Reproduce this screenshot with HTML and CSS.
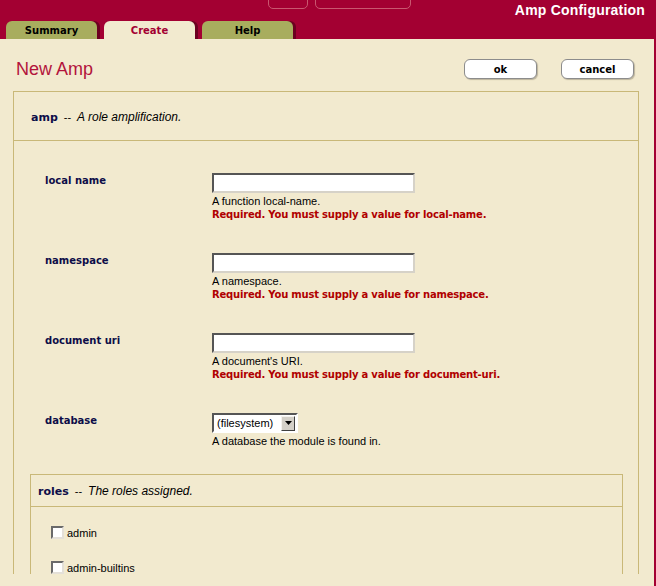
FILE: index.html
```html
<!DOCTYPE html>
<html lang="en">
<head>
  <meta charset="UTF-8" />
  <title>Amp Configuration</title>
  <link rel="stylesheet" href="styles.css">
</head>
<body>
  <div class="header">
    <div class="topbar">
      <span class="ghost ghost-a"></span>
      <span class="ghost ghost-b"></span>
      <span class="app-title">Amp Configuration</span>
    </div>
    <div class="tabs">
      <span class="tab">Summary</span>
      <span class="tab active">Create</span>
      <span class="tab">Help</span>
    </div>
  </div>

  <div class="main">
    <div class="title-row">
      <h1>New Amp</h1>
      <div class="actions">
        <button class="btn">ok</button>
        <button class="btn">cancel</button>
      </div>
    </div>

    <div class="box">
      <div class="box-head"><b>amp</b> <span class="dash">--</span> <i>A role amplification.</i></div>
      <div class="fields">
        <div class="field">
          <div class="label">local name</div>
          <div class="control">
            <input type="text" class="text">
            <div class="help">A function local-name.</div>
            <div class="error">Required. You must supply a value for local-name.</div>
          </div>
        </div>
        <div class="field">
          <div class="label">namespace</div>
          <div class="control">
            <input type="text" class="text">
            <div class="help">A namespace.</div>
            <div class="error">Required. You must supply a value for namespace.</div>
          </div>
        </div>
        <div class="field">
          <div class="label">document uri</div>
          <div class="control">
            <input type="text" class="text">
            <div class="help">A document's URI.</div>
            <div class="error">Required. You must supply a value for document-uri.</div>
          </div>
        </div>
        <div class="field last">
          <div class="label">database</div>
          <div class="control">
            <span class="select">
              <span class="select-val">(filesystem)</span>
              <span class="select-btn">
                <svg width="7" height="4" viewBox="0 0 7 4"><path d="M0 0h7L3.5 4z" fill="#000"/></svg>
              </span>
            </span>
            <div class="help">A database the module is found in.</div>
          </div>
        </div>

        <div class="box roles">
          <div class="box-head"><b>roles</b> <span class="dash">--</span> <i>The roles assigned.</i></div>
          <div class="checks">
            <label class="check"><input type="checkbox"> admin</label>
            <label class="check"><input type="checkbox"> admin-builtins</label>
          </div>
        </div>
      </div>
    </div>
  </div>
</body>
</html>
```

FILE: styles.css
```css
:root {
  --crimson: #a30032;
  --crimson-dark: #6c0020;
  --cream: #f2eacf;
  --line: #c9b878;
  --olive: #a8ad5e;
  --navy: #0d0d48;
  --err: #b00000;
}

* {
  box-sizing: border-box;
}

body {
  margin: 0;
  background: var(--crimson);
  font-family: "Liberation Sans", Arial, sans-serif;
  font-size: 11px;
  color: #000;
  height: 586px;
  overflow: hidden;
}

.header {
  height: 39px;
  display: flex;
  flex-direction: column;
}

.topbar {
  height: 21px;
  display: flex;
  align-items: flex-start;
  padding-left: 268px;
}

.ghost {
  display: block;
  height: 20px;
  margin-top: -11px;
  border: 1px solid #c9576f;
  border-radius: 5px;
}

.ghost-a { width: 40px; }
.ghost-b { width: 96px; margin-left: 7px; }

.app-title {
  margin-left: auto;
  margin-right: 11px;
  padding-top: 2px;
  color: #fff;
  font-weight: bold;
  font-size: 14px;
  line-height: 16px;
  letter-spacing: 0.2px;
}

.tabs {
  display: flex;
  gap: 7px;
  padding-left: 6px;
  height: 18px;
}

.tab {
  width: 91px;
  height: 18px;
  background: var(--olive);
  border-radius: 6px 6px 0 0;
  box-shadow: 3px 0 0 var(--crimson-dark);
  font-family: "DejaVu Sans", Verdana, sans-serif;
  font-weight: bold;
  font-size: 10px;
  line-height: 19px;
  text-align: center;
  color: #000;
}

.tab.active {
  background: var(--cream);
  color: var(--crimson);
}

.main {
  background: var(--cream);
  margin-right: 2px;
  height: 547px;
  padding-top: 13px;
}

.title-row {
  display: flex;
  align-items: center;
  justify-content: space-between;
  height: 34px;
  padding: 0 20px 0 16px;
  margin-bottom: 5px;
}

.title-row h1 {
  margin: 0;
  font-weight: normal;
  font-size: 18px;
  color: #b3143c;
}

.actions {
  display: flex;
  gap: 24px;
}

.btn {
  width: 73px;
  height: 20px;
  padding: 0;
  background: #fff;
  border: 1px solid #8c8c8c;
  border-radius: 6px;
  box-shadow: 1px 1px 1px #bcb49c;
  font-family: "DejaVu Sans", Verdana, sans-serif;
  font-weight: bold;
  font-size: 10px;
  color: #000;
}

.box {
  margin: 0 15px 0 13px;
  border: 1px solid var(--line);
  border-bottom: none;
}

.box-head {
  height: 49px;
  border-bottom: 1px solid var(--line);
  display: flex;
  align-items: center;
  gap: 6px;
  padding-left: 17px;
  padding-top: 2px;
}

.box-head b {
  font-family: "DejaVu Sans", Verdana, sans-serif;
  font-size: 11px;
  color: var(--navy);
}

.box-head .dash {
  font-size: 11px;
}

.box-head i {
  font-size: 12px;
}

.fields {
  padding-top: 32px;
}

.field {
  display: flex;
  height: 80px;
}

.field.last {
  height: 61px;
}

.label {
  width: 198px;
  padding-left: 31px;
  padding-top: 1px;
  font-family: "DejaVu Sans", Verdana, sans-serif;
  font-weight: bold;
  font-size: 10px;
  line-height: 14px;
  color: var(--navy);
}

.text {
  display: block;
  width: 203px;
  height: 20px;
  margin: 0;
  padding: 0 2px;
  background: #fff;
  border: 2px solid;
  border-color: #555 #d6d2c8 #d6d2c8 #555;
  font: 11px "Liberation Sans", Arial, sans-serif;
}

.help {
  margin-top: 2px;
  line-height: 13px;
}

.error {
  font-family: "DejaVu Sans", Verdana, sans-serif;
  font-weight: bold;
  font-size: 10px;
  line-height: 14px;
  letter-spacing: -0.2px;
  color: var(--err);
}

.select {
  display: flex;
  align-items: center;
  width: 86px;
  height: 20px;
  background: #fff;
  border: 2px solid;
  border-color: #555 #fff #fff #555;
}

.select-val {
  flex: 1;
  padding-left: 3px;
  font-size: 11px;
  line-height: 14px;
}

.select-btn {
  width: 14px;
  height: 15px;
  margin-right: 1px;
  display: flex;
  align-items: center;
  justify-content: center;
  background: #d4d0c8;
  border: 1px solid;
  border-color: #f4f2ee #404040 #404040 #f4f2ee;
}

.roles {
  margin: 0 15px 0 16px;
}

.roles .box-head {
  height: 32px;
  padding-left: 7px;
  padding-top: 1px;
}

.checks {
  padding: 19px 0 0 20px;
  display: flex;
  flex-direction: column;
  gap: 22px;
}

.check {
  display: flex;
  align-items: center;
  gap: 3px;
  height: 13px;
  font-size: 11px;
}

.check input {
  appearance: none;
  margin: 0;
  width: 13px;
  height: 13px;
  background: #fff;
  border: 2px solid;
  border-color: #6a6a6a #e4e0d8 #e4e0d8 #6a6a6a;
}
```
